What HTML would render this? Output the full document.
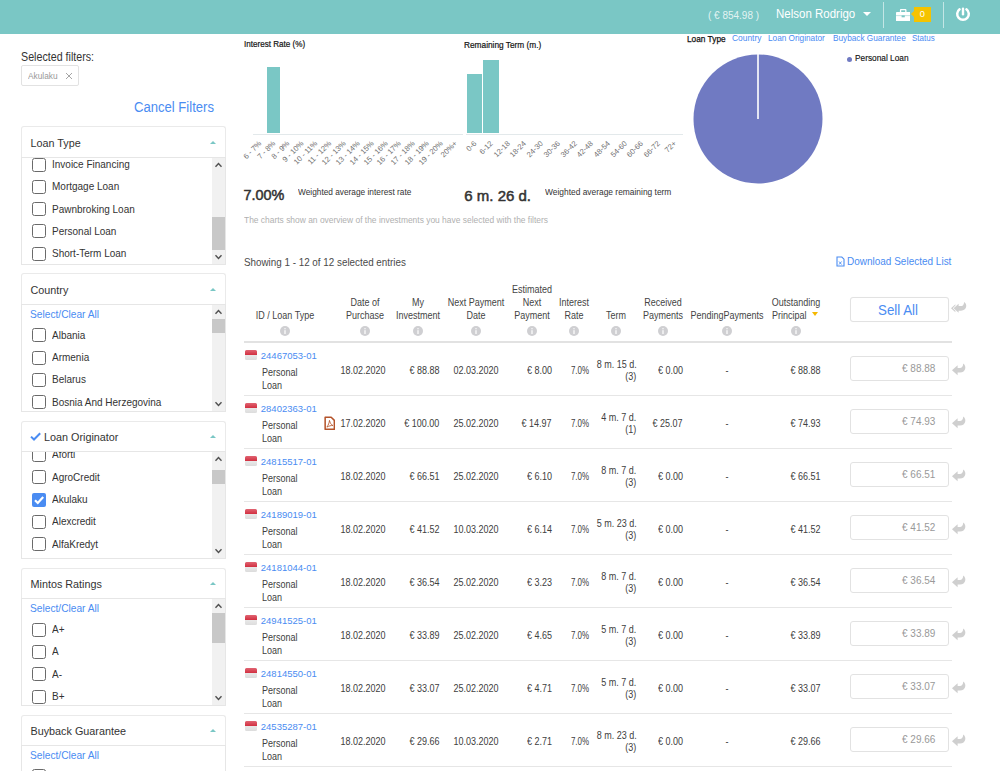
<!DOCTYPE html><html><head><meta charset="utf-8"><style>
html,body{margin:0;padding:0;}
body{width:1000px;height:771px;overflow:hidden;position:relative;background:#fff;font-family:"Liberation Sans", sans-serif;}
.t{position:absolute;white-space:nowrap;}
.rl{position:absolute;font-size:7.6px;line-height:9px;color:#707070;white-space:nowrap;transform:rotate(-45deg);transform-origin:100% 0;}
.ic{position:absolute;}
.flag{position:absolute;width:12px;height:10px;border-radius:1.5px;background:linear-gradient(#d9434f 0,#e25a66 50%,#f2f2f2 50%,#e9e9e9 100%);box-shadow:0 0.5px 1px rgba(0,0,0,0.25);}
</style></head><body>
<div style="position:absolute;left:0px;top:0px;width:1000px;height:34px;background:#7ac7c5"></div>
<div class="t" style="left:708px;top:7.94px;font-size:11.20px;line-height:14.56px;color:rgba(255,255,255,0.8);font-weight:normal;transform:scaleX(0.8929);transform-origin:left center;">( € 854.98 )</div>
<div class="t" style="left:775.5px;top:6.27px;font-size:12.88px;line-height:16.74px;color:#fff;font-weight:normal;transform:scaleX(0.8929);transform-origin:left center;">Nelson Rodrigo</div>
<div style="position:absolute;left:863px;top:11.5px;width:0;height:0;border-left:4px solid transparent;border-right:4px solid transparent;border-top:4.5px solid #fff"></div>
<div style="position:absolute;left:883px;top:2px;width:1px;height:26px;background:rgba(255,255,255,0.55)"></div>
<div style="position:absolute;left:943px;top:2px;width:1px;height:26px;background:rgba(255,255,255,0.55)"></div>
<svg style="position:absolute;left:896px;top:9px" width="14.4" height="12.3" viewBox="0 0 14.4 12.3"><path d="M3.9 3.2V1.2C3.9 .5 4.4 0 5.1 0H9.3C10 0 10.5 .5 10.5 1.2V3.2H9.2V1.3H5.2V3.2Z" fill="#fff"/><rect x="0" y="2.9" width="14.4" height="9.4" rx="0.8" fill="#fff"/><rect x="0" y="6.3" width="14.4" height="0.8" fill="#7ac7c5" opacity="0.6"/><rect x="5.6" y="6.4" width="3.2" height="1.9" fill="#7ac7c5"/></svg>
<div style="position:absolute;left:914px;top:6.5px;width:17px;height:15px;background:#f5c300"></div>
<div style="position:absolute;left:910.5px;top:11px;width:0;height:0;border-top:3.5px solid transparent;border-bottom:3.5px solid transparent;border-right:3.5px solid #f5c300"></div>
<div class="t" style="left:772.2px;width:300px;text-align:center;top:9.23px;font-size:9.20px;line-height:11.96px;color:#fff;font-weight:normal;">0</div>
<svg style="position:absolute;left:955px;top:6px" width="16" height="16" viewBox="0 0 16 16"><path d="M4.59 3.36A5.8 5.8 0 1 0 11.41 3.36" fill="none" stroke="#fff" stroke-width="2.5" stroke-linecap="round"/><path d="M8 2.8V8.2" stroke="#fff" stroke-width="2.4" stroke-linecap="round"/></svg>
<div class="t" style="left:20.5px;top:49.86px;font-size:11.98px;line-height:15.58px;color:#333;font-weight:normal;transform:scaleX(0.8929);transform-origin:left center;">Selected filters:</div>
<div style="position:absolute;left:21px;top:65px;width:58px;height:21px;border:1px solid #e2e2e2;border-radius:2px;box-sizing:border-box"></div>
<div class="t" style="left:28px;top:70.34px;font-size:9.30px;line-height:12.08px;color:#999;font-weight:normal;transform:scaleX(0.8929);transform-origin:left center;">Akulaku</div>
<svg style="position:absolute;left:65px;top:72px" width="8" height="8" viewBox="0 0 8 8"><path d="M1 1L7 7M7 1L1 7" stroke="#a0a0a0" stroke-width="0.95"/></svg>
<div class="t" style="left:133.5px;top:97.78px;font-size:14.67px;line-height:19.07px;color:#4a8cf2;font-weight:normal;transform:scaleX(0.8929);transform-origin:left center;">Cancel Filters</div>
<div style="position:absolute;left:21px;top:126px;width:205px;height:31px;border:1px solid #eaeaea;border-bottom:none;border-radius:3px 3px 0 0;box-sizing:border-box;background:#fff"></div>
<div class="t" style="left:30.5px;top:136.44px;font-size:10.80px;line-height:14.04px;color:#333;font-weight:normal;">Loan Type</div>
<div style="position:absolute;left:210.3px;top:140.6px;width:0;height:0;border-left:3.3px solid transparent;border-right:3.3px solid transparent;border-bottom:3.9px solid #7ac7c5"></div>
<div style="position:absolute;left:21px;top:157px;width:205px;height:108px;border:1px solid #e6e6e6;box-sizing:border-box"></div>
<div style="position:absolute;left:212px;top:158px;width:13px;height:106px;background:#f1f1f1"></div>
<div style="position:absolute;left:212px;top:216.5px;width:13px;height:33.5px;background:#c8c8c8"></div>
<svg style="position:absolute;left:214px;top:162px" width="9" height="6" viewBox="0 0 9 6"><path d="M1.5 4.8L4.5 1.6L7.5 4.8" fill="none" stroke="#505050" stroke-width="1.4"/></svg>
<svg style="position:absolute;left:214px;top:254px" width="9" height="6" viewBox="0 0 9 6"><path d="M1.5 1.2L4.5 4.4L7.5 1.2" fill="none" stroke="#505050" stroke-width="1.4"/></svg>
<div style="position:absolute;left:22px;top:158px;width:190px;height:106px;overflow:hidden">
<div style="position:absolute;left:10px;top:-0.5px;width:14px;height:14px;border:1.8px solid #6a6a6a;border-radius:2.5px;box-sizing:border-box"></div>
<div class="t" style="left:30px;top:-1.06px;font-size:11.20px;line-height:14.56px;color:#333;font-weight:normal;transform:scaleX(0.8929);transform-origin:left center;">Invoice Financing</div>
<div style="position:absolute;left:10px;top:21.8px;width:14px;height:14px;border:1.8px solid #6a6a6a;border-radius:2.5px;box-sizing:border-box"></div>
<div class="t" style="left:30px;top:21.24px;font-size:11.20px;line-height:14.56px;color:#333;font-weight:normal;transform:scaleX(0.8929);transform-origin:left center;">Mortgage Loan</div>
<div style="position:absolute;left:10px;top:44.1px;width:14px;height:14px;border:1.8px solid #6a6a6a;border-radius:2.5px;box-sizing:border-box"></div>
<div class="t" style="left:30px;top:43.54px;font-size:11.20px;line-height:14.56px;color:#333;font-weight:normal;transform:scaleX(0.8929);transform-origin:left center;">Pawnbroking Loan</div>
<div style="position:absolute;left:10px;top:66.4px;width:14px;height:14px;border:1.8px solid #6a6a6a;border-radius:2.5px;box-sizing:border-box"></div>
<div class="t" style="left:30px;top:65.84px;font-size:11.20px;line-height:14.56px;color:#333;font-weight:normal;transform:scaleX(0.8929);transform-origin:left center;">Personal Loan</div>
<div style="position:absolute;left:10px;top:88.7px;width:14px;height:14px;border:1.8px solid #6a6a6a;border-radius:2.5px;box-sizing:border-box"></div>
<div class="t" style="left:30px;top:88.14px;font-size:11.20px;line-height:14.56px;color:#333;font-weight:normal;transform:scaleX(0.8929);transform-origin:left center;">Short-Term Loan</div>
</div>
<div style="position:absolute;left:21px;top:273px;width:205px;height:31px;border:1px solid #eaeaea;border-bottom:none;border-radius:3px 3px 0 0;box-sizing:border-box;background:#fff"></div>
<div class="t" style="left:30.5px;top:283.44px;font-size:10.80px;line-height:14.04px;color:#333;font-weight:normal;">Country</div>
<div style="position:absolute;left:210.3px;top:287.6px;width:0;height:0;border-left:3.3px solid transparent;border-right:3.3px solid transparent;border-bottom:3.9px solid #7ac7c5"></div>
<div style="position:absolute;left:21px;top:304px;width:205px;height:108px;border:1px solid #e6e6e6;box-sizing:border-box"></div>
<div style="position:absolute;left:212px;top:305px;width:13px;height:106px;background:#f1f1f1"></div>
<div style="position:absolute;left:212px;top:318.7px;width:13px;height:14.0px;background:#c8c8c8"></div>
<svg style="position:absolute;left:214px;top:309px" width="9" height="6" viewBox="0 0 9 6"><path d="M1.5 4.8L4.5 1.6L7.5 4.8" fill="none" stroke="#505050" stroke-width="1.4"/></svg>
<svg style="position:absolute;left:214px;top:401px" width="9" height="6" viewBox="0 0 9 6"><path d="M1.5 1.2L4.5 4.4L7.5 1.2" fill="none" stroke="#505050" stroke-width="1.4"/></svg>
<div style="position:absolute;left:22px;top:305px;width:190px;height:106px;overflow:hidden">
<div class="t" style="left:8px;top:1.82px;font-size:11.42px;line-height:14.85px;color:#4a8cf2;font-weight:normal;transform:scaleX(0.8929);transform-origin:left center;">Select/Clear All</div>
<div style="position:absolute;left:10px;top:23.3px;width:14px;height:14px;border:1.8px solid #6a6a6a;border-radius:2.5px;box-sizing:border-box"></div>
<div class="t" style="left:30px;top:22.74px;font-size:11.20px;line-height:14.56px;color:#333;font-weight:normal;transform:scaleX(0.8929);transform-origin:left center;">Albania</div>
<div style="position:absolute;left:10px;top:45.6px;width:14px;height:14px;border:1.8px solid #6a6a6a;border-radius:2.5px;box-sizing:border-box"></div>
<div class="t" style="left:30px;top:45.04px;font-size:11.20px;line-height:14.56px;color:#333;font-weight:normal;transform:scaleX(0.8929);transform-origin:left center;">Armenia</div>
<div style="position:absolute;left:10px;top:67.9px;width:14px;height:14px;border:1.8px solid #6a6a6a;border-radius:2.5px;box-sizing:border-box"></div>
<div class="t" style="left:30px;top:67.34px;font-size:11.20px;line-height:14.56px;color:#333;font-weight:normal;transform:scaleX(0.8929);transform-origin:left center;">Belarus</div>
<div style="position:absolute;left:10px;top:90.2px;width:14px;height:14px;border:1.8px solid #6a6a6a;border-radius:2.5px;box-sizing:border-box"></div>
<div class="t" style="left:30px;top:89.64px;font-size:11.20px;line-height:14.56px;color:#333;font-weight:normal;transform:scaleX(0.8929);transform-origin:left center;">Bosnia And Herzegovina</div>
<div style="position:absolute;left:10px;top:112.5px;width:14px;height:14px;border:1.8px solid #6a6a6a;border-radius:2.5px;box-sizing:border-box"></div>
<div class="t" style="left:30px;top:111.94px;font-size:11.20px;line-height:14.56px;color:#333;font-weight:normal;transform:scaleX(0.8929);transform-origin:left center;">Bulgaria</div>
</div>
<div style="position:absolute;left:21px;top:421px;width:205px;height:30px;border:1px solid #eaeaea;border-bottom:none;border-radius:3px 3px 0 0;box-sizing:border-box;background:#fff"></div>
<svg style="position:absolute;left:29.5px;top:432px" width="11" height="9" viewBox="0 0 11 9"><path d="M1 4.6L4 7.5L10.2 1.2" fill="none" stroke="#4a8cf2" stroke-width="2"/></svg>
<div class="t" style="left:44px;top:430.44px;font-size:10.80px;line-height:14.04px;color:#333;font-weight:normal;">Loan Originator</div>
<div style="position:absolute;left:210.3px;top:434.6px;width:0;height:0;border-left:3.3px solid transparent;border-right:3.3px solid transparent;border-bottom:3.9px solid #7ac7c5"></div>
<div style="position:absolute;left:21px;top:451px;width:205px;height:108px;border:1px solid #e6e6e6;box-sizing:border-box"></div>
<div style="position:absolute;left:212px;top:452px;width:13px;height:106px;background:#f1f1f1"></div>
<div style="position:absolute;left:212px;top:470px;width:13px;height:13.5px;background:#c8c8c8"></div>
<svg style="position:absolute;left:214px;top:456px" width="9" height="6" viewBox="0 0 9 6"><path d="M1.5 4.8L4.5 1.6L7.5 4.8" fill="none" stroke="#505050" stroke-width="1.4"/></svg>
<svg style="position:absolute;left:214px;top:548px" width="9" height="6" viewBox="0 0 9 6"><path d="M1.5 1.2L4.5 4.4L7.5 1.2" fill="none" stroke="#505050" stroke-width="1.4"/></svg>
<div style="position:absolute;left:22px;top:452px;width:190px;height:106px;overflow:hidden">
<div style="position:absolute;left:10px;top:-4.1px;width:14px;height:14px;border:1.8px solid #6a6a6a;border-radius:2.5px;box-sizing:border-box"></div>
<div class="t" style="left:30px;top:-4.66px;font-size:11.20px;line-height:14.56px;color:#333;font-weight:normal;transform:scaleX(0.8929);transform-origin:left center;">Aforti</div>
<div style="position:absolute;left:10px;top:18.2px;width:14px;height:14px;border:1.8px solid #6a6a6a;border-radius:2.5px;box-sizing:border-box"></div>
<div class="t" style="left:30px;top:17.64px;font-size:11.20px;line-height:14.56px;color:#333;font-weight:normal;transform:scaleX(0.8929);transform-origin:left center;">AgroCredit</div>
<div style="position:absolute;left:10px;top:40.5px;width:14px;height:14px;border-radius:2px;background:#4a8cf2"></div>
<svg style="position:absolute;left:10px;top:40.5px" width="14" height="14" viewBox="0 0 14 14"><path d="M3 7.2L5.8 10L11.2 4" fill="none" stroke="#fff" stroke-width="2.2"/></svg>
<div class="t" style="left:30px;top:39.94px;font-size:11.20px;line-height:14.56px;color:#333;font-weight:normal;transform:scaleX(0.8929);transform-origin:left center;">Akulaku</div>
<div style="position:absolute;left:10px;top:62.8px;width:14px;height:14px;border:1.8px solid #6a6a6a;border-radius:2.5px;box-sizing:border-box"></div>
<div class="t" style="left:30px;top:62.24px;font-size:11.20px;line-height:14.56px;color:#333;font-weight:normal;transform:scaleX(0.8929);transform-origin:left center;">Alexcredit</div>
<div style="position:absolute;left:10px;top:85.1px;width:14px;height:14px;border:1.8px solid #6a6a6a;border-radius:2.5px;box-sizing:border-box"></div>
<div class="t" style="left:30px;top:84.54px;font-size:11.20px;line-height:14.56px;color:#333;font-weight:normal;transform:scaleX(0.8929);transform-origin:left center;">AlfaKredyt</div>
</div>
<div style="position:absolute;left:21px;top:568px;width:205px;height:30px;border:1px solid #eaeaea;border-bottom:none;border-radius:3px 3px 0 0;box-sizing:border-box;background:#fff"></div>
<div class="t" style="left:30.5px;top:577.44px;font-size:10.80px;line-height:14.04px;color:#333;font-weight:normal;">Mintos Ratings</div>
<div style="position:absolute;left:210.3px;top:581.6px;width:0;height:0;border-left:3.3px solid transparent;border-right:3.3px solid transparent;border-bottom:3.9px solid #7ac7c5"></div>
<div style="position:absolute;left:21px;top:598px;width:205px;height:108px;border:1px solid #e6e6e6;box-sizing:border-box"></div>
<div style="position:absolute;left:212px;top:599px;width:13px;height:106px;background:#f1f1f1"></div>
<div style="position:absolute;left:212px;top:613.4px;width:13px;height:30.100000000000023px;background:#c8c8c8"></div>
<svg style="position:absolute;left:214px;top:603px" width="9" height="6" viewBox="0 0 9 6"><path d="M1.5 4.8L4.5 1.6L7.5 4.8" fill="none" stroke="#505050" stroke-width="1.4"/></svg>
<svg style="position:absolute;left:214px;top:695px" width="9" height="6" viewBox="0 0 9 6"><path d="M1.5 1.2L4.5 4.4L7.5 1.2" fill="none" stroke="#505050" stroke-width="1.4"/></svg>
<div style="position:absolute;left:22px;top:599px;width:190px;height:106px;overflow:hidden">
<div class="t" style="left:8px;top:2.02px;font-size:11.42px;line-height:14.85px;color:#4a8cf2;font-weight:normal;transform:scaleX(0.8929);transform-origin:left center;">Select/Clear All</div>
<div style="position:absolute;left:10px;top:23.6px;width:14px;height:14px;border:1.8px solid #6a6a6a;border-radius:2.5px;box-sizing:border-box"></div>
<div class="t" style="left:30px;top:23.04px;font-size:11.20px;line-height:14.56px;color:#333;font-weight:normal;transform:scaleX(0.8929);transform-origin:left center;">A+</div>
<div style="position:absolute;left:10px;top:45.9px;width:14px;height:14px;border:1.8px solid #6a6a6a;border-radius:2.5px;box-sizing:border-box"></div>
<div class="t" style="left:30px;top:45.34px;font-size:11.20px;line-height:14.56px;color:#333;font-weight:normal;transform:scaleX(0.8929);transform-origin:left center;">A</div>
<div style="position:absolute;left:10px;top:68.2px;width:14px;height:14px;border:1.8px solid #6a6a6a;border-radius:2.5px;box-sizing:border-box"></div>
<div class="t" style="left:30px;top:67.64px;font-size:11.20px;line-height:14.56px;color:#333;font-weight:normal;transform:scaleX(0.8929);transform-origin:left center;">A-</div>
<div style="position:absolute;left:10px;top:90.5px;width:14px;height:14px;border:1.8px solid #6a6a6a;border-radius:2.5px;box-sizing:border-box"></div>
<div class="t" style="left:30px;top:89.94px;font-size:11.20px;line-height:14.56px;color:#333;font-weight:normal;transform:scaleX(0.8929);transform-origin:left center;">B+</div>
<div style="position:absolute;left:10px;top:112.8px;width:14px;height:14px;border:1.8px solid #6a6a6a;border-radius:2.5px;box-sizing:border-box"></div>
<div class="t" style="left:30px;top:112.24px;font-size:11.20px;line-height:14.56px;color:#333;font-weight:normal;transform:scaleX(0.8929);transform-origin:left center;">B</div>
</div>
<div style="position:absolute;left:21px;top:715px;width:205px;height:30px;border:1px solid #eaeaea;border-bottom:none;border-radius:3px 3px 0 0;box-sizing:border-box;background:#fff"></div>
<div class="t" style="left:30.5px;top:724.44px;font-size:10.80px;line-height:14.04px;color:#333;font-weight:normal;">Buyback Guarantee</div>
<div style="position:absolute;left:210.3px;top:728.6px;width:0;height:0;border-left:3.3px solid transparent;border-right:3.3px solid transparent;border-bottom:3.9px solid #7ac7c5"></div>
<div style="position:absolute;left:21px;top:745px;width:205px;height:108px;border:1px solid #e6e6e6;box-sizing:border-box"></div>
<div style="position:absolute;left:22px;top:746px;width:190px;height:106px;overflow:hidden">
<div class="t" style="left:8px;top:2.12px;font-size:11.42px;line-height:14.85px;color:#4a8cf2;font-weight:normal;transform:scaleX(0.8929);transform-origin:left center;">Select/Clear All</div>
<div style="position:absolute;left:10px;top:23.3px;width:14px;height:14px;border:1.8px solid #6a6a6a;border-radius:2.5px;box-sizing:border-box"></div>
<div class="t" style="left:30px;top:22.74px;font-size:11.20px;line-height:14.56px;color:#333;font-weight:normal;transform:scaleX(0.8929);transform-origin:left center;">Yes</div>
<div style="position:absolute;left:10px;top:45.6px;width:14px;height:14px;border:1.8px solid #6a6a6a;border-radius:2.5px;box-sizing:border-box"></div>
<div class="t" style="left:30px;top:45.04px;font-size:11.20px;line-height:14.56px;color:#333;font-weight:normal;transform:scaleX(0.8929);transform-origin:left center;">No</div>
</div>
<div class="t" style="left:243.5px;top:39.06px;font-size:9.07px;line-height:11.79px;color:#111;font-weight:normal;transform:scaleX(0.8929);transform-origin:left center;-webkit-text-stroke:0.2px #111">Interest Rate (%)</div>
<div style="position:absolute;left:252.5px;top:134px;width:210px;height:1px;background:#e3e9eb"></div>
<div style="position:absolute;left:267px;top:67px;width:13px;height:66px;background:#7ac7c5"></div>
<div class="rl" style="right:742.7px;top:139px">6 - 7%</div>
<div class="rl" style="right:728.8px;top:139px">7 - 8%</div>
<div class="rl" style="right:714.8px;top:139px">8 - 9%</div>
<div class="rl" style="right:700.9px;top:139px">9 - 10%</div>
<div class="rl" style="right:686.9px;top:139px">10 - 11%</div>
<div class="rl" style="right:673.0px;top:139px">11 - 12%</div>
<div class="rl" style="right:659.0px;top:139px">12 - 13%</div>
<div class="rl" style="right:645.0px;top:139px">13 - 14%</div>
<div class="rl" style="right:631.1px;top:139px">14 - 15%</div>
<div class="rl" style="right:617.1px;top:139px">15 - 16%</div>
<div class="rl" style="right:603.2px;top:139px">16 - 17%</div>
<div class="rl" style="right:589.2px;top:139px">17 - 18%</div>
<div class="rl" style="right:575.3px;top:139px">18 - 19%</div>
<div class="rl" style="right:561.4px;top:139px">19 - 20%</div>
<div class="rl" style="right:547.4px;top:139px">20%+</div>
<div class="t" style="left:464.3px;top:38.84px;font-size:9.30px;line-height:12.08px;color:#111;font-weight:normal;transform:scaleX(0.8929);transform-origin:left center;-webkit-text-stroke:0.2px #111">Remaining Term (m.)</div>
<div style="position:absolute;left:466px;top:134px;width:217px;height:1px;background:#e3e9eb"></div>
<div style="position:absolute;left:466.5px;top:73.5px;width:15.5px;height:59.5px;background:#7ac7c5"></div>
<div style="position:absolute;left:483px;top:60px;width:16px;height:73px;background:#7ac7c5"></div>
<div class="rl" style="right:528.2px;top:139px">0-6</div>
<div class="rl" style="right:511.5px;top:139px">6-12</div>
<div class="rl" style="right:494.8px;top:139px">12-18</div>
<div class="rl" style="right:478.1px;top:139px">18-24</div>
<div class="rl" style="right:461.4px;top:139px">24-30</div>
<div class="rl" style="right:444.7px;top:139px">30-36</div>
<div class="rl" style="right:428.0px;top:139px">36-42</div>
<div class="rl" style="right:411.3px;top:139px">42-48</div>
<div class="rl" style="right:394.6px;top:139px">48-54</div>
<div class="rl" style="right:377.9px;top:139px">54-60</div>
<div class="rl" style="right:361.2px;top:139px">60-66</div>
<div class="rl" style="right:344.5px;top:139px">66-72</div>
<div class="rl" style="right:327.8px;top:139px">72+</div>
<div class="t" style="left:243.5px;top:186.25px;font-size:14.40px;line-height:18.72px;color:#333;font-weight:normal;-webkit-text-stroke:0.5px #333">7.00%</div>
<div class="t" style="left:297.5px;top:185.84px;font-size:9.30px;line-height:12.08px;color:#333;font-weight:normal;transform:scaleX(0.8929);transform-origin:left center;">Weighted average interest rate</div>
<div class="t" style="left:464.3px;top:185.65px;font-size:15.00px;line-height:19.5px;color:#333;font-weight:normal;-webkit-text-stroke:0.5px #333">6 m. 26 d.</div>
<div class="t" style="left:544.5px;top:185.73px;font-size:9.41px;line-height:12.23px;color:#333;font-weight:normal;transform:scaleX(0.8929);transform-origin:left center;">Weighted average remaining term</div>
<div class="t" style="left:243.5px;top:214.18px;font-size:9.45px;line-height:12.29px;color:#b0b0b0;font-weight:normal;transform:scaleX(0.8929);transform-origin:left center;">The charts show an overview of the investments you have selected with the filters</div>
<div class="t" style="left:687px;top:32.84px;font-size:9.30px;line-height:12.08px;color:#111;font-weight:normal;transform:scaleX(0.8929);transform-origin:left center;-webkit-text-stroke:0.25px #111">Loan Type</div>
<div class="t" style="left:731.8px;top:33.17px;font-size:8.96px;line-height:11.65px;color:#4a8cf2;font-weight:normal;transform:scaleX(0.9375);transform-origin:left center;">Country</div>
<div class="t" style="left:768.3px;top:33.17px;font-size:8.96px;line-height:11.65px;color:#4a8cf2;font-weight:normal;transform:scaleX(0.9196);transform-origin:left center;">Loan Originator</div>
<div class="t" style="left:832.6px;top:33.17px;font-size:8.96px;line-height:11.65px;color:#4a8cf2;font-weight:normal;transform:scaleX(0.9196);transform-origin:left center;">Buyback Guarantee</div>
<div class="t" style="left:912px;top:33.17px;font-size:8.96px;line-height:11.65px;color:#4a8cf2;font-weight:normal;transform:scaleX(0.8929);transform-origin:left center;">Status</div>
<svg style="position:absolute;left:693px;top:54px" width="130" height="130" viewBox="0 0 130 130"><circle cx="65" cy="65" r="64.5" fill="#707ac2"/><rect x="64.2" y="0" width="1.6" height="65" fill="#fff"/></svg>
<div style="position:absolute;left:846.5px;top:56.5px;width:5px;height:5px;border-radius:50%;background:#707ac2"></div>
<div class="t" style="left:854.7px;top:52.34px;font-size:9.30px;line-height:12.08px;color:#111;font-weight:normal;transform:scaleX(0.8929);transform-origin:left center;-webkit-text-stroke:0.15px #111">Personal Loan</div>
<div class="t" style="left:243.5px;top:255.14px;font-size:11.20px;line-height:14.56px;color:#4a4a4a;font-weight:normal;transform:scaleX(0.8795);transform-origin:left center;">Showing 1 - 12 of 12 selected entries</div>
<svg style="position:absolute;left:836px;top:256px" width="9" height="11" viewBox="0 0 9 11"><path d="M1 1h4.8L8 3.2V10H1z" fill="none" stroke="#4a8cf2" stroke-width="1.1"/><path d="M3 5.5l2.6 3M5.6 5.5L3 8.5" stroke="#4a8cf2" stroke-width="0.9"/></svg>
<div class="t" style="left:847px;top:253.94px;font-size:11.20px;line-height:14.56px;color:#4a8cf2;font-weight:normal;transform:scaleX(0.8929);transform-origin:left center;">Download Selected List</div>
<div class="t" style="left:134.5px;width:300px;text-align:center;top:308.66px;font-size:10.08px;line-height:13.1px;color:#444;font-weight:normal;transform:scaleX(0.8929);transform-origin:center center;">ID / Loan Type</div>
<svg class="ic" style="left:279.5px;top:325.7px" width="10" height="10" viewBox="0 0 10 10"><circle cx="5" cy="5" r="5" fill="#cfcfd2"/><rect x="4.4" y="4.2" width="1.2" height="3.8" fill="#fff"/><rect x="4.4" y="2.1" width="1.2" height="1.2" fill="#fff"/></svg>
<div class="t" style="left:215px;width:300px;text-align:center;top:295.66px;font-size:10.08px;line-height:13.1px;color:#444;font-weight:normal;transform:scaleX(0.8929);transform-origin:center center;">Date of</div>
<div class="t" style="left:215px;width:300px;text-align:center;top:308.66px;font-size:10.08px;line-height:13.1px;color:#444;font-weight:normal;transform:scaleX(0.8929);transform-origin:center center;">Purchase</div>
<svg class="ic" style="left:360px;top:325.7px" width="10" height="10" viewBox="0 0 10 10"><circle cx="5" cy="5" r="5" fill="#cfcfd2"/><rect x="4.4" y="4.2" width="1.2" height="3.8" fill="#fff"/><rect x="4.4" y="2.1" width="1.2" height="1.2" fill="#fff"/></svg>
<div class="t" style="left:268px;width:300px;text-align:center;top:295.66px;font-size:10.08px;line-height:13.1px;color:#444;font-weight:normal;transform:scaleX(0.8929);transform-origin:center center;">My</div>
<div class="t" style="left:268px;width:300px;text-align:center;top:308.66px;font-size:10.08px;line-height:13.1px;color:#444;font-weight:normal;transform:scaleX(0.8929);transform-origin:center center;">Investment</div>
<svg class="ic" style="left:413px;top:325.7px" width="10" height="10" viewBox="0 0 10 10"><circle cx="5" cy="5" r="5" fill="#cfcfd2"/><rect x="4.4" y="4.2" width="1.2" height="3.8" fill="#fff"/><rect x="4.4" y="2.1" width="1.2" height="1.2" fill="#fff"/></svg>
<div class="t" style="left:326px;width:300px;text-align:center;top:295.66px;font-size:10.08px;line-height:13.1px;color:#444;font-weight:normal;transform:scaleX(0.8929);transform-origin:center center;">Next Payment</div>
<div class="t" style="left:326px;width:300px;text-align:center;top:308.66px;font-size:10.08px;line-height:13.1px;color:#444;font-weight:normal;transform:scaleX(0.8929);transform-origin:center center;">Date</div>
<svg class="ic" style="left:471px;top:325.7px" width="10" height="10" viewBox="0 0 10 10"><circle cx="5" cy="5" r="5" fill="#cfcfd2"/><rect x="4.4" y="4.2" width="1.2" height="3.8" fill="#fff"/><rect x="4.4" y="2.1" width="1.2" height="1.2" fill="#fff"/></svg>
<div class="t" style="left:382px;width:300px;text-align:center;top:282.66px;font-size:10.08px;line-height:13.1px;color:#444;font-weight:normal;transform:scaleX(0.8929);transform-origin:center center;">Estimated</div>
<div class="t" style="left:382px;width:300px;text-align:center;top:295.66px;font-size:10.08px;line-height:13.1px;color:#444;font-weight:normal;transform:scaleX(0.8929);transform-origin:center center;">Next</div>
<div class="t" style="left:382px;width:300px;text-align:center;top:308.66px;font-size:10.08px;line-height:13.1px;color:#444;font-weight:normal;transform:scaleX(0.8929);transform-origin:center center;">Payment</div>
<svg class="ic" style="left:527px;top:325.7px" width="10" height="10" viewBox="0 0 10 10"><circle cx="5" cy="5" r="5" fill="#cfcfd2"/><rect x="4.4" y="4.2" width="1.2" height="3.8" fill="#fff"/><rect x="4.4" y="2.1" width="1.2" height="1.2" fill="#fff"/></svg>
<div class="t" style="left:423.79999999999995px;width:300px;text-align:center;top:295.66px;font-size:10.08px;line-height:13.1px;color:#444;font-weight:normal;transform:scaleX(0.8929);transform-origin:center center;">Interest</div>
<div class="t" style="left:423.79999999999995px;width:300px;text-align:center;top:308.66px;font-size:10.08px;line-height:13.1px;color:#444;font-weight:normal;transform:scaleX(0.8929);transform-origin:center center;">Rate</div>
<svg class="ic" style="left:568.8px;top:325.7px" width="10" height="10" viewBox="0 0 10 10"><circle cx="5" cy="5" r="5" fill="#cfcfd2"/><rect x="4.4" y="4.2" width="1.2" height="3.8" fill="#fff"/><rect x="4.4" y="2.1" width="1.2" height="1.2" fill="#fff"/></svg>
<div class="t" style="left:465.6px;width:300px;text-align:center;top:308.66px;font-size:10.08px;line-height:13.1px;color:#444;font-weight:normal;transform:scaleX(0.8929);transform-origin:center center;">Term</div>
<svg class="ic" style="left:610.6px;top:325.7px" width="10" height="10" viewBox="0 0 10 10"><circle cx="5" cy="5" r="5" fill="#cfcfd2"/><rect x="4.4" y="4.2" width="1.2" height="3.8" fill="#fff"/><rect x="4.4" y="2.1" width="1.2" height="1.2" fill="#fff"/></svg>
<div class="t" style="left:513px;width:300px;text-align:center;top:295.66px;font-size:10.08px;line-height:13.1px;color:#444;font-weight:normal;transform:scaleX(0.8929);transform-origin:center center;">Received</div>
<div class="t" style="left:513px;width:300px;text-align:center;top:308.66px;font-size:10.08px;line-height:13.1px;color:#444;font-weight:normal;transform:scaleX(0.8929);transform-origin:center center;">Payments</div>
<svg class="ic" style="left:658px;top:325.7px" width="10" height="10" viewBox="0 0 10 10"><circle cx="5" cy="5" r="5" fill="#cfcfd2"/><rect x="4.4" y="4.2" width="1.2" height="3.8" fill="#fff"/><rect x="4.4" y="2.1" width="1.2" height="1.2" fill="#fff"/></svg>
<div class="t" style="left:577px;width:300px;text-align:center;top:308.66px;font-size:10.08px;line-height:13.1px;color:#444;font-weight:normal;transform:scaleX(0.8929);transform-origin:center center;">PendingPayments</div>
<svg class="ic" style="left:722px;top:325.7px" width="10" height="10" viewBox="0 0 10 10"><circle cx="5" cy="5" r="5" fill="#cfcfd2"/><rect x="4.4" y="4.2" width="1.2" height="3.8" fill="#fff"/><rect x="4.4" y="2.1" width="1.2" height="1.2" fill="#fff"/></svg>
<div class="t" style="left:646px;width:300px;text-align:center;top:295.66px;font-size:10.08px;line-height:13.1px;color:#444;font-weight:normal;transform:scaleX(0.8929);transform-origin:center center;">Outstanding</div>
<svg class="ic" style="left:791px;top:325.7px" width="10" height="10" viewBox="0 0 10 10"><circle cx="5" cy="5" r="5" fill="#cfcfd2"/><rect x="4.4" y="4.2" width="1.2" height="3.8" fill="#fff"/><rect x="4.4" y="2.1" width="1.2" height="1.2" fill="#fff"/></svg>
<div class="t" style="left:772px;top:308.66px;font-size:10.08px;line-height:13.1px;color:#444;font-weight:normal;transform:scaleX(0.8929);transform-origin:left center;">Principal</div>
<div style="position:absolute;left:812.3px;top:311.8px;width:0;height:0;border-left:3.7px solid transparent;border-right:3.7px solid transparent;border-top:4.6px solid #f5b800"></div>
<div style="position:absolute;left:849.5px;top:297px;width:99px;height:24.5px;border:1px solid #e2e2e2;box-shadow:0 0 1px rgba(0,0,0,0.06);border-radius:3px;box-sizing:border-box;background:#fff"></div>
<div class="t" style="left:748.4px;width:300px;text-align:center;top:300.56px;font-size:14.90px;line-height:19.36px;color:#4a8cf2;font-weight:normal;transform:scaleX(0.8929);transform-origin:center center;">Sell All</div>
<svg style="position:absolute;left:950.5px;top:302px" width="16" height="12" viewBox="0 0 16 12"><path d="M2.6 6.2L7.6 1.7V10.7Z" fill="#cfcfcf"/><path d="M0 6.2L4.4 2.2V3.6L1.8 6.2L4.4 8.8V10.2Z" fill="#cfcfcf"/><path d="M7 4.1H10C11.6 4.1 12.8 3 13.2 0C14.8 1.3 15.5 2.8 15.2 4.6C14.8 7 12.8 8.7 10 8.7H7Z" fill="#cfcfcf"/></svg>
<div style="position:absolute;left:243.5px;top:341px;width:708.5px;height:2px;background:#e2e2e2"></div>
<svg style="position:absolute;left:245px;top:350.3px" width="12" height="10" viewBox="0 0 12 10"><defs><linearGradient id="fr0" x1="0" y1="0" x2="0" y2="1"><stop offset="0" stop-color="#e06472"/><stop offset="1" stop-color="#d22f40"/></linearGradient><linearGradient id="fw0" x1="0" y1="0" x2="0" y2="1"><stop offset="0" stop-color="#f6f6f6"/><stop offset="1" stop-color="#dcdcdc"/></linearGradient></defs><rect x="0" y="0" width="12" height="10" rx="1.5" fill="url(#fw0)"/><path d="M1.5 0H10.5A1.5 1.5 0 0 1 12 1.5V5H0V1.5A1.5 1.5 0 0 1 1.5 0Z" fill="url(#fr0)"/></svg>
<div class="t" style="left:260.8px;top:349.63px;font-size:9.50px;line-height:12.35px;color:#4a8cf2;font-weight:normal;">24467053-01</div>
<div class="t" style="left:261.6px;top:365.86px;font-size:10.08px;line-height:13.1px;color:#404040;font-weight:normal;transform:scaleX(0.8929);transform-origin:left center;">Personal</div>
<div class="t" style="left:261.6px;top:379.06px;font-size:10.08px;line-height:13.1px;color:#404040;font-weight:normal;transform:scaleX(0.8929);transform-origin:left center;">Loan</div>
<div class="t" style="left:213.3px;width:300px;text-align:center;top:364.06px;font-size:10.08px;line-height:13.1px;color:#404040;font-weight:normal;transform:scaleX(0.8929);transform-origin:center center;">18.02.2020</div>
<div class="t" style="right:560.5px;top:364.06px;font-size:10.08px;line-height:13.1px;color:#404040;font-weight:normal;transform:scaleX(0.8929);transform-origin:right center;">€ 88.88</div>
<div class="t" style="left:325.6px;width:300px;text-align:center;top:364.06px;font-size:10.08px;line-height:13.1px;color:#404040;font-weight:normal;transform:scaleX(0.8929);transform-origin:center center;">02.03.2020</div>
<div class="t" style="right:448px;top:364.06px;font-size:10.08px;line-height:13.1px;color:#404040;font-weight:normal;transform:scaleX(0.8929);transform-origin:right center;">€ 8.00</div>
<div class="t" style="right:411.4px;top:364.06px;font-size:10.08px;line-height:13.1px;color:#404040;font-weight:normal;transform:scaleX(0.7857);transform-origin:right center;">7.0%</div>
<div class="t" style="right:363.5px;top:358.06px;font-size:10.08px;line-height:13.1px;color:#404040;font-weight:normal;transform:scaleX(0.8929);transform-origin:right center;">8 m. 15 d.</div>
<div class="t" style="right:363.5px;top:369.66px;font-size:10.08px;line-height:13.1px;color:#404040;font-weight:normal;transform:scaleX(0.8929);transform-origin:right center;">(3)</div>
<div class="t" style="right:317px;top:364.06px;font-size:10.08px;line-height:13.1px;color:#404040;font-weight:normal;transform:scaleX(0.8929);transform-origin:right center;">€ 0.00</div>
<div class="t" style="left:577px;width:300px;text-align:center;top:363.56px;font-size:10.08px;line-height:13.1px;color:#404040;font-weight:normal;transform:scaleX(0.8929);transform-origin:center center;">-</div>
<div class="t" style="right:179.20000000000005px;top:364.06px;font-size:10.08px;line-height:13.1px;color:#404040;font-weight:normal;transform:scaleX(0.8929);transform-origin:right center;">€ 88.88</div>
<div style="position:absolute;left:849.5px;top:356.2px;width:99px;height:24.6px;border:1px solid #e2e2e2;border-radius:3px;box-sizing:border-box;background:#fff"></div>
<div class="t" style="right:64.5px;top:361.44px;font-size:11.20px;line-height:14.56px;color:#999;font-weight:normal;transform:scaleX(0.8929);transform-origin:right center;">€ 88.88</div>
<svg style="position:absolute;left:952px;top:363.3px" width="14" height="13" viewBox="0 0 14 13"><path d="M0 7.2L5.6 2.2V12.2Z" fill="#cfcfcf"/><path d="M5 4.9H8C9.6 4.9 10.9 3.8 11.3 0.4C12.9 1.7 13.6 3.2 13.3 5.2C12.9 7.8 10.8 9.6 8 9.6H5Z" fill="#cfcfcf"/></svg>
<div style="position:absolute;left:243.5px;top:395px;width:708.5px;height:1px;background:#e6e6e6"></div>
<svg style="position:absolute;left:245px;top:403.3px" width="12" height="10" viewBox="0 0 12 10"><defs><linearGradient id="fr1" x1="0" y1="0" x2="0" y2="1"><stop offset="0" stop-color="#e06472"/><stop offset="1" stop-color="#d22f40"/></linearGradient><linearGradient id="fw1" x1="0" y1="0" x2="0" y2="1"><stop offset="0" stop-color="#f6f6f6"/><stop offset="1" stop-color="#dcdcdc"/></linearGradient></defs><rect x="0" y="0" width="12" height="10" rx="1.5" fill="url(#fw1)"/><path d="M1.5 0H10.5A1.5 1.5 0 0 1 12 1.5V5H0V1.5A1.5 1.5 0 0 1 1.5 0Z" fill="url(#fr1)"/></svg>
<div class="t" style="left:260.8px;top:402.63px;font-size:9.50px;line-height:12.35px;color:#4a8cf2;font-weight:normal;">28402363-01</div>
<div class="t" style="left:261.6px;top:418.86px;font-size:10.08px;line-height:13.1px;color:#404040;font-weight:normal;transform:scaleX(0.8929);transform-origin:left center;">Personal</div>
<div class="t" style="left:261.6px;top:432.06px;font-size:10.08px;line-height:13.1px;color:#404040;font-weight:normal;transform:scaleX(0.8929);transform-origin:left center;">Loan</div>
<svg style="position:absolute;left:323.5px;top:415.5px" width="11.5" height="14.5" viewBox="0 0 12 15"><path d="M1.2 1.2h6.3l3.3 3.3v9.3H1.2z" fill="none" stroke="#b4532a" stroke-width="1.6" stroke-linejoin="round"/><path d="M3 11.5c1.5-2 2.5-4.5 2.7-7 .6 2.8 1.8 4.4 3.6 5.4-1.8-.2-4 .4-6.3 1.6z" fill="none" stroke="#b4532a" stroke-width="0.9"/></svg>
<div class="t" style="left:213.3px;width:300px;text-align:center;top:417.06px;font-size:10.08px;line-height:13.1px;color:#404040;font-weight:normal;transform:scaleX(0.8929);transform-origin:center center;">17.02.2020</div>
<div class="t" style="right:560.5px;top:417.06px;font-size:10.08px;line-height:13.1px;color:#404040;font-weight:normal;transform:scaleX(0.8929);transform-origin:right center;">€ 100.00</div>
<div class="t" style="left:325.6px;width:300px;text-align:center;top:417.06px;font-size:10.08px;line-height:13.1px;color:#404040;font-weight:normal;transform:scaleX(0.8929);transform-origin:center center;">25.02.2020</div>
<div class="t" style="right:448px;top:417.06px;font-size:10.08px;line-height:13.1px;color:#404040;font-weight:normal;transform:scaleX(0.8929);transform-origin:right center;">€ 14.97</div>
<div class="t" style="right:411.4px;top:417.06px;font-size:10.08px;line-height:13.1px;color:#404040;font-weight:normal;transform:scaleX(0.7857);transform-origin:right center;">7.0%</div>
<div class="t" style="right:363.5px;top:411.06px;font-size:10.08px;line-height:13.1px;color:#404040;font-weight:normal;transform:scaleX(0.8929);transform-origin:right center;">4 m. 7 d.</div>
<div class="t" style="right:363.5px;top:422.66px;font-size:10.08px;line-height:13.1px;color:#404040;font-weight:normal;transform:scaleX(0.8929);transform-origin:right center;">(1)</div>
<div class="t" style="right:317px;top:417.06px;font-size:10.08px;line-height:13.1px;color:#404040;font-weight:normal;transform:scaleX(0.8929);transform-origin:right center;">€ 25.07</div>
<div class="t" style="left:577px;width:300px;text-align:center;top:416.56px;font-size:10.08px;line-height:13.1px;color:#404040;font-weight:normal;transform:scaleX(0.8929);transform-origin:center center;">-</div>
<div class="t" style="right:179.20000000000005px;top:417.06px;font-size:10.08px;line-height:13.1px;color:#404040;font-weight:normal;transform:scaleX(0.8929);transform-origin:right center;">€ 74.93</div>
<div style="position:absolute;left:849.5px;top:409.2px;width:99px;height:24.6px;border:1px solid #e2e2e2;border-radius:3px;box-sizing:border-box;background:#fff"></div>
<div class="t" style="right:64.5px;top:414.44px;font-size:11.20px;line-height:14.56px;color:#999;font-weight:normal;transform:scaleX(0.8929);transform-origin:right center;">€ 74.93</div>
<svg style="position:absolute;left:952px;top:416.3px" width="14" height="13" viewBox="0 0 14 13"><path d="M0 7.2L5.6 2.2V12.2Z" fill="#cfcfcf"/><path d="M5 4.9H8C9.6 4.9 10.9 3.8 11.3 0.4C12.9 1.7 13.6 3.2 13.3 5.2C12.9 7.8 10.8 9.6 8 9.6H5Z" fill="#cfcfcf"/></svg>
<div style="position:absolute;left:243.5px;top:448px;width:708.5px;height:1px;background:#e6e6e6"></div>
<svg style="position:absolute;left:245px;top:456.3px" width="12" height="10" viewBox="0 0 12 10"><defs><linearGradient id="fr2" x1="0" y1="0" x2="0" y2="1"><stop offset="0" stop-color="#e06472"/><stop offset="1" stop-color="#d22f40"/></linearGradient><linearGradient id="fw2" x1="0" y1="0" x2="0" y2="1"><stop offset="0" stop-color="#f6f6f6"/><stop offset="1" stop-color="#dcdcdc"/></linearGradient></defs><rect x="0" y="0" width="12" height="10" rx="1.5" fill="url(#fw2)"/><path d="M1.5 0H10.5A1.5 1.5 0 0 1 12 1.5V5H0V1.5A1.5 1.5 0 0 1 1.5 0Z" fill="url(#fr2)"/></svg>
<div class="t" style="left:260.8px;top:455.63px;font-size:9.50px;line-height:12.35px;color:#4a8cf2;font-weight:normal;">24815517-01</div>
<div class="t" style="left:261.6px;top:471.86px;font-size:10.08px;line-height:13.1px;color:#404040;font-weight:normal;transform:scaleX(0.8929);transform-origin:left center;">Personal</div>
<div class="t" style="left:261.6px;top:485.06px;font-size:10.08px;line-height:13.1px;color:#404040;font-weight:normal;transform:scaleX(0.8929);transform-origin:left center;">Loan</div>
<div class="t" style="left:213.3px;width:300px;text-align:center;top:470.06px;font-size:10.08px;line-height:13.1px;color:#404040;font-weight:normal;transform:scaleX(0.8929);transform-origin:center center;">18.02.2020</div>
<div class="t" style="right:560.5px;top:470.06px;font-size:10.08px;line-height:13.1px;color:#404040;font-weight:normal;transform:scaleX(0.8929);transform-origin:right center;">€ 66.51</div>
<div class="t" style="left:325.6px;width:300px;text-align:center;top:470.06px;font-size:10.08px;line-height:13.1px;color:#404040;font-weight:normal;transform:scaleX(0.8929);transform-origin:center center;">25.02.2020</div>
<div class="t" style="right:448px;top:470.06px;font-size:10.08px;line-height:13.1px;color:#404040;font-weight:normal;transform:scaleX(0.8929);transform-origin:right center;">€ 6.10</div>
<div class="t" style="right:411.4px;top:470.06px;font-size:10.08px;line-height:13.1px;color:#404040;font-weight:normal;transform:scaleX(0.7857);transform-origin:right center;">7.0%</div>
<div class="t" style="right:363.5px;top:464.06px;font-size:10.08px;line-height:13.1px;color:#404040;font-weight:normal;transform:scaleX(0.8929);transform-origin:right center;">8 m. 7 d.</div>
<div class="t" style="right:363.5px;top:475.66px;font-size:10.08px;line-height:13.1px;color:#404040;font-weight:normal;transform:scaleX(0.8929);transform-origin:right center;">(3)</div>
<div class="t" style="right:317px;top:470.06px;font-size:10.08px;line-height:13.1px;color:#404040;font-weight:normal;transform:scaleX(0.8929);transform-origin:right center;">€ 0.00</div>
<div class="t" style="left:577px;width:300px;text-align:center;top:469.56px;font-size:10.08px;line-height:13.1px;color:#404040;font-weight:normal;transform:scaleX(0.8929);transform-origin:center center;">-</div>
<div class="t" style="right:179.20000000000005px;top:470.06px;font-size:10.08px;line-height:13.1px;color:#404040;font-weight:normal;transform:scaleX(0.8929);transform-origin:right center;">€ 66.51</div>
<div style="position:absolute;left:849.5px;top:462.2px;width:99px;height:24.6px;border:1px solid #e2e2e2;border-radius:3px;box-sizing:border-box;background:#fff"></div>
<div class="t" style="right:64.5px;top:467.44px;font-size:11.20px;line-height:14.56px;color:#999;font-weight:normal;transform:scaleX(0.8929);transform-origin:right center;">€ 66.51</div>
<svg style="position:absolute;left:952px;top:469.3px" width="14" height="13" viewBox="0 0 14 13"><path d="M0 7.2L5.6 2.2V12.2Z" fill="#cfcfcf"/><path d="M5 4.9H8C9.6 4.9 10.9 3.8 11.3 0.4C12.9 1.7 13.6 3.2 13.3 5.2C12.9 7.8 10.8 9.6 8 9.6H5Z" fill="#cfcfcf"/></svg>
<div style="position:absolute;left:243.5px;top:501px;width:708.5px;height:1px;background:#e6e6e6"></div>
<svg style="position:absolute;left:245px;top:509.3px" width="12" height="10" viewBox="0 0 12 10"><defs><linearGradient id="fr3" x1="0" y1="0" x2="0" y2="1"><stop offset="0" stop-color="#e06472"/><stop offset="1" stop-color="#d22f40"/></linearGradient><linearGradient id="fw3" x1="0" y1="0" x2="0" y2="1"><stop offset="0" stop-color="#f6f6f6"/><stop offset="1" stop-color="#dcdcdc"/></linearGradient></defs><rect x="0" y="0" width="12" height="10" rx="1.5" fill="url(#fw3)"/><path d="M1.5 0H10.5A1.5 1.5 0 0 1 12 1.5V5H0V1.5A1.5 1.5 0 0 1 1.5 0Z" fill="url(#fr3)"/></svg>
<div class="t" style="left:260.8px;top:508.63px;font-size:9.50px;line-height:12.35px;color:#4a8cf2;font-weight:normal;">24189019-01</div>
<div class="t" style="left:261.6px;top:524.86px;font-size:10.08px;line-height:13.1px;color:#404040;font-weight:normal;transform:scaleX(0.8929);transform-origin:left center;">Personal</div>
<div class="t" style="left:261.6px;top:538.06px;font-size:10.08px;line-height:13.1px;color:#404040;font-weight:normal;transform:scaleX(0.8929);transform-origin:left center;">Loan</div>
<div class="t" style="left:213.3px;width:300px;text-align:center;top:523.06px;font-size:10.08px;line-height:13.1px;color:#404040;font-weight:normal;transform:scaleX(0.8929);transform-origin:center center;">18.02.2020</div>
<div class="t" style="right:560.5px;top:523.06px;font-size:10.08px;line-height:13.1px;color:#404040;font-weight:normal;transform:scaleX(0.8929);transform-origin:right center;">€ 41.52</div>
<div class="t" style="left:325.6px;width:300px;text-align:center;top:523.06px;font-size:10.08px;line-height:13.1px;color:#404040;font-weight:normal;transform:scaleX(0.8929);transform-origin:center center;">10.03.2020</div>
<div class="t" style="right:448px;top:523.06px;font-size:10.08px;line-height:13.1px;color:#404040;font-weight:normal;transform:scaleX(0.8929);transform-origin:right center;">€ 6.14</div>
<div class="t" style="right:411.4px;top:523.06px;font-size:10.08px;line-height:13.1px;color:#404040;font-weight:normal;transform:scaleX(0.7857);transform-origin:right center;">7.0%</div>
<div class="t" style="right:363.5px;top:517.06px;font-size:10.08px;line-height:13.1px;color:#404040;font-weight:normal;transform:scaleX(0.8929);transform-origin:right center;">5 m. 23 d.</div>
<div class="t" style="right:363.5px;top:528.66px;font-size:10.08px;line-height:13.1px;color:#404040;font-weight:normal;transform:scaleX(0.8929);transform-origin:right center;">(3)</div>
<div class="t" style="right:317px;top:523.06px;font-size:10.08px;line-height:13.1px;color:#404040;font-weight:normal;transform:scaleX(0.8929);transform-origin:right center;">€ 0.00</div>
<div class="t" style="left:577px;width:300px;text-align:center;top:522.56px;font-size:10.08px;line-height:13.1px;color:#404040;font-weight:normal;transform:scaleX(0.8929);transform-origin:center center;">-</div>
<div class="t" style="right:179.20000000000005px;top:523.06px;font-size:10.08px;line-height:13.1px;color:#404040;font-weight:normal;transform:scaleX(0.8929);transform-origin:right center;">€ 41.52</div>
<div style="position:absolute;left:849.5px;top:515.2px;width:99px;height:24.6px;border:1px solid #e2e2e2;border-radius:3px;box-sizing:border-box;background:#fff"></div>
<div class="t" style="right:64.5px;top:520.44px;font-size:11.20px;line-height:14.56px;color:#999;font-weight:normal;transform:scaleX(0.8929);transform-origin:right center;">€ 41.52</div>
<svg style="position:absolute;left:952px;top:522.3px" width="14" height="13" viewBox="0 0 14 13"><path d="M0 7.2L5.6 2.2V12.2Z" fill="#cfcfcf"/><path d="M5 4.9H8C9.6 4.9 10.9 3.8 11.3 0.4C12.9 1.7 13.6 3.2 13.3 5.2C12.9 7.8 10.8 9.6 8 9.6H5Z" fill="#cfcfcf"/></svg>
<div style="position:absolute;left:243.5px;top:554px;width:708.5px;height:1px;background:#e6e6e6"></div>
<svg style="position:absolute;left:245px;top:562.3px" width="12" height="10" viewBox="0 0 12 10"><defs><linearGradient id="fr4" x1="0" y1="0" x2="0" y2="1"><stop offset="0" stop-color="#e06472"/><stop offset="1" stop-color="#d22f40"/></linearGradient><linearGradient id="fw4" x1="0" y1="0" x2="0" y2="1"><stop offset="0" stop-color="#f6f6f6"/><stop offset="1" stop-color="#dcdcdc"/></linearGradient></defs><rect x="0" y="0" width="12" height="10" rx="1.5" fill="url(#fw4)"/><path d="M1.5 0H10.5A1.5 1.5 0 0 1 12 1.5V5H0V1.5A1.5 1.5 0 0 1 1.5 0Z" fill="url(#fr4)"/></svg>
<div class="t" style="left:260.8px;top:561.63px;font-size:9.50px;line-height:12.35px;color:#4a8cf2;font-weight:normal;">24181044-01</div>
<div class="t" style="left:261.6px;top:577.86px;font-size:10.08px;line-height:13.1px;color:#404040;font-weight:normal;transform:scaleX(0.8929);transform-origin:left center;">Personal</div>
<div class="t" style="left:261.6px;top:591.06px;font-size:10.08px;line-height:13.1px;color:#404040;font-weight:normal;transform:scaleX(0.8929);transform-origin:left center;">Loan</div>
<div class="t" style="left:213.3px;width:300px;text-align:center;top:576.06px;font-size:10.08px;line-height:13.1px;color:#404040;font-weight:normal;transform:scaleX(0.8929);transform-origin:center center;">18.02.2020</div>
<div class="t" style="right:560.5px;top:576.06px;font-size:10.08px;line-height:13.1px;color:#404040;font-weight:normal;transform:scaleX(0.8929);transform-origin:right center;">€ 36.54</div>
<div class="t" style="left:325.6px;width:300px;text-align:center;top:576.06px;font-size:10.08px;line-height:13.1px;color:#404040;font-weight:normal;transform:scaleX(0.8929);transform-origin:center center;">25.02.2020</div>
<div class="t" style="right:448px;top:576.06px;font-size:10.08px;line-height:13.1px;color:#404040;font-weight:normal;transform:scaleX(0.8929);transform-origin:right center;">€ 3.23</div>
<div class="t" style="right:411.4px;top:576.06px;font-size:10.08px;line-height:13.1px;color:#404040;font-weight:normal;transform:scaleX(0.7857);transform-origin:right center;">7.0%</div>
<div class="t" style="right:363.5px;top:570.06px;font-size:10.08px;line-height:13.1px;color:#404040;font-weight:normal;transform:scaleX(0.8929);transform-origin:right center;">8 m. 7 d.</div>
<div class="t" style="right:363.5px;top:581.66px;font-size:10.08px;line-height:13.1px;color:#404040;font-weight:normal;transform:scaleX(0.8929);transform-origin:right center;">(3)</div>
<div class="t" style="right:317px;top:576.06px;font-size:10.08px;line-height:13.1px;color:#404040;font-weight:normal;transform:scaleX(0.8929);transform-origin:right center;">€ 0.00</div>
<div class="t" style="left:577px;width:300px;text-align:center;top:575.56px;font-size:10.08px;line-height:13.1px;color:#404040;font-weight:normal;transform:scaleX(0.8929);transform-origin:center center;">-</div>
<div class="t" style="right:179.20000000000005px;top:576.06px;font-size:10.08px;line-height:13.1px;color:#404040;font-weight:normal;transform:scaleX(0.8929);transform-origin:right center;">€ 36.54</div>
<div style="position:absolute;left:849.5px;top:568.2px;width:99px;height:24.6px;border:1px solid #e2e2e2;border-radius:3px;box-sizing:border-box;background:#fff"></div>
<div class="t" style="right:64.5px;top:573.44px;font-size:11.20px;line-height:14.56px;color:#999;font-weight:normal;transform:scaleX(0.8929);transform-origin:right center;">€ 36.54</div>
<svg style="position:absolute;left:952px;top:575.3px" width="14" height="13" viewBox="0 0 14 13"><path d="M0 7.2L5.6 2.2V12.2Z" fill="#cfcfcf"/><path d="M5 4.9H8C9.6 4.9 10.9 3.8 11.3 0.4C12.9 1.7 13.6 3.2 13.3 5.2C12.9 7.8 10.8 9.6 8 9.6H5Z" fill="#cfcfcf"/></svg>
<div style="position:absolute;left:243.5px;top:607px;width:708.5px;height:1px;background:#e6e6e6"></div>
<svg style="position:absolute;left:245px;top:615.3px" width="12" height="10" viewBox="0 0 12 10"><defs><linearGradient id="fr5" x1="0" y1="0" x2="0" y2="1"><stop offset="0" stop-color="#e06472"/><stop offset="1" stop-color="#d22f40"/></linearGradient><linearGradient id="fw5" x1="0" y1="0" x2="0" y2="1"><stop offset="0" stop-color="#f6f6f6"/><stop offset="1" stop-color="#dcdcdc"/></linearGradient></defs><rect x="0" y="0" width="12" height="10" rx="1.5" fill="url(#fw5)"/><path d="M1.5 0H10.5A1.5 1.5 0 0 1 12 1.5V5H0V1.5A1.5 1.5 0 0 1 1.5 0Z" fill="url(#fr5)"/></svg>
<div class="t" style="left:260.8px;top:614.63px;font-size:9.50px;line-height:12.35px;color:#4a8cf2;font-weight:normal;">24941525-01</div>
<div class="t" style="left:261.6px;top:630.86px;font-size:10.08px;line-height:13.1px;color:#404040;font-weight:normal;transform:scaleX(0.8929);transform-origin:left center;">Personal</div>
<div class="t" style="left:261.6px;top:644.06px;font-size:10.08px;line-height:13.1px;color:#404040;font-weight:normal;transform:scaleX(0.8929);transform-origin:left center;">Loan</div>
<div class="t" style="left:213.3px;width:300px;text-align:center;top:629.06px;font-size:10.08px;line-height:13.1px;color:#404040;font-weight:normal;transform:scaleX(0.8929);transform-origin:center center;">18.02.2020</div>
<div class="t" style="right:560.5px;top:629.06px;font-size:10.08px;line-height:13.1px;color:#404040;font-weight:normal;transform:scaleX(0.8929);transform-origin:right center;">€ 33.89</div>
<div class="t" style="left:325.6px;width:300px;text-align:center;top:629.06px;font-size:10.08px;line-height:13.1px;color:#404040;font-weight:normal;transform:scaleX(0.8929);transform-origin:center center;">25.02.2020</div>
<div class="t" style="right:448px;top:629.06px;font-size:10.08px;line-height:13.1px;color:#404040;font-weight:normal;transform:scaleX(0.8929);transform-origin:right center;">€ 4.65</div>
<div class="t" style="right:411.4px;top:629.06px;font-size:10.08px;line-height:13.1px;color:#404040;font-weight:normal;transform:scaleX(0.7857);transform-origin:right center;">7.0%</div>
<div class="t" style="right:363.5px;top:623.06px;font-size:10.08px;line-height:13.1px;color:#404040;font-weight:normal;transform:scaleX(0.8929);transform-origin:right center;">5 m. 7 d.</div>
<div class="t" style="right:363.5px;top:634.66px;font-size:10.08px;line-height:13.1px;color:#404040;font-weight:normal;transform:scaleX(0.8929);transform-origin:right center;">(3)</div>
<div class="t" style="right:317px;top:629.06px;font-size:10.08px;line-height:13.1px;color:#404040;font-weight:normal;transform:scaleX(0.8929);transform-origin:right center;">€ 0.00</div>
<div class="t" style="left:577px;width:300px;text-align:center;top:628.56px;font-size:10.08px;line-height:13.1px;color:#404040;font-weight:normal;transform:scaleX(0.8929);transform-origin:center center;">-</div>
<div class="t" style="right:179.20000000000005px;top:629.06px;font-size:10.08px;line-height:13.1px;color:#404040;font-weight:normal;transform:scaleX(0.8929);transform-origin:right center;">€ 33.89</div>
<div style="position:absolute;left:849.5px;top:621.2px;width:99px;height:24.6px;border:1px solid #e2e2e2;border-radius:3px;box-sizing:border-box;background:#fff"></div>
<div class="t" style="right:64.5px;top:626.44px;font-size:11.20px;line-height:14.56px;color:#999;font-weight:normal;transform:scaleX(0.8929);transform-origin:right center;">€ 33.89</div>
<svg style="position:absolute;left:952px;top:628.3px" width="14" height="13" viewBox="0 0 14 13"><path d="M0 7.2L5.6 2.2V12.2Z" fill="#cfcfcf"/><path d="M5 4.9H8C9.6 4.9 10.9 3.8 11.3 0.4C12.9 1.7 13.6 3.2 13.3 5.2C12.9 7.8 10.8 9.6 8 9.6H5Z" fill="#cfcfcf"/></svg>
<div style="position:absolute;left:243.5px;top:660px;width:708.5px;height:1px;background:#e6e6e6"></div>
<svg style="position:absolute;left:245px;top:668.3px" width="12" height="10" viewBox="0 0 12 10"><defs><linearGradient id="fr6" x1="0" y1="0" x2="0" y2="1"><stop offset="0" stop-color="#e06472"/><stop offset="1" stop-color="#d22f40"/></linearGradient><linearGradient id="fw6" x1="0" y1="0" x2="0" y2="1"><stop offset="0" stop-color="#f6f6f6"/><stop offset="1" stop-color="#dcdcdc"/></linearGradient></defs><rect x="0" y="0" width="12" height="10" rx="1.5" fill="url(#fw6)"/><path d="M1.5 0H10.5A1.5 1.5 0 0 1 12 1.5V5H0V1.5A1.5 1.5 0 0 1 1.5 0Z" fill="url(#fr6)"/></svg>
<div class="t" style="left:260.8px;top:667.63px;font-size:9.50px;line-height:12.35px;color:#4a8cf2;font-weight:normal;">24814550-01</div>
<div class="t" style="left:261.6px;top:683.86px;font-size:10.08px;line-height:13.1px;color:#404040;font-weight:normal;transform:scaleX(0.8929);transform-origin:left center;">Personal</div>
<div class="t" style="left:261.6px;top:697.06px;font-size:10.08px;line-height:13.1px;color:#404040;font-weight:normal;transform:scaleX(0.8929);transform-origin:left center;">Loan</div>
<div class="t" style="left:213.3px;width:300px;text-align:center;top:682.06px;font-size:10.08px;line-height:13.1px;color:#404040;font-weight:normal;transform:scaleX(0.8929);transform-origin:center center;">18.02.2020</div>
<div class="t" style="right:560.5px;top:682.06px;font-size:10.08px;line-height:13.1px;color:#404040;font-weight:normal;transform:scaleX(0.8929);transform-origin:right center;">€ 33.07</div>
<div class="t" style="left:325.6px;width:300px;text-align:center;top:682.06px;font-size:10.08px;line-height:13.1px;color:#404040;font-weight:normal;transform:scaleX(0.8929);transform-origin:center center;">25.02.2020</div>
<div class="t" style="right:448px;top:682.06px;font-size:10.08px;line-height:13.1px;color:#404040;font-weight:normal;transform:scaleX(0.8929);transform-origin:right center;">€ 4.71</div>
<div class="t" style="right:411.4px;top:682.06px;font-size:10.08px;line-height:13.1px;color:#404040;font-weight:normal;transform:scaleX(0.7857);transform-origin:right center;">7.0%</div>
<div class="t" style="right:363.5px;top:676.06px;font-size:10.08px;line-height:13.1px;color:#404040;font-weight:normal;transform:scaleX(0.8929);transform-origin:right center;">5 m. 7 d.</div>
<div class="t" style="right:363.5px;top:687.66px;font-size:10.08px;line-height:13.1px;color:#404040;font-weight:normal;transform:scaleX(0.8929);transform-origin:right center;">(3)</div>
<div class="t" style="right:317px;top:682.06px;font-size:10.08px;line-height:13.1px;color:#404040;font-weight:normal;transform:scaleX(0.8929);transform-origin:right center;">€ 0.00</div>
<div class="t" style="left:577px;width:300px;text-align:center;top:681.56px;font-size:10.08px;line-height:13.1px;color:#404040;font-weight:normal;transform:scaleX(0.8929);transform-origin:center center;">-</div>
<div class="t" style="right:179.20000000000005px;top:682.06px;font-size:10.08px;line-height:13.1px;color:#404040;font-weight:normal;transform:scaleX(0.8929);transform-origin:right center;">€ 33.07</div>
<div style="position:absolute;left:849.5px;top:674.2px;width:99px;height:24.6px;border:1px solid #e2e2e2;border-radius:3px;box-sizing:border-box;background:#fff"></div>
<div class="t" style="right:64.5px;top:679.44px;font-size:11.20px;line-height:14.56px;color:#999;font-weight:normal;transform:scaleX(0.8929);transform-origin:right center;">€ 33.07</div>
<svg style="position:absolute;left:952px;top:681.3px" width="14" height="13" viewBox="0 0 14 13"><path d="M0 7.2L5.6 2.2V12.2Z" fill="#cfcfcf"/><path d="M5 4.9H8C9.6 4.9 10.9 3.8 11.3 0.4C12.9 1.7 13.6 3.2 13.3 5.2C12.9 7.8 10.8 9.6 8 9.6H5Z" fill="#cfcfcf"/></svg>
<div style="position:absolute;left:243.5px;top:713px;width:708.5px;height:1px;background:#e6e6e6"></div>
<svg style="position:absolute;left:245px;top:721.3px" width="12" height="10" viewBox="0 0 12 10"><defs><linearGradient id="fr7" x1="0" y1="0" x2="0" y2="1"><stop offset="0" stop-color="#e06472"/><stop offset="1" stop-color="#d22f40"/></linearGradient><linearGradient id="fw7" x1="0" y1="0" x2="0" y2="1"><stop offset="0" stop-color="#f6f6f6"/><stop offset="1" stop-color="#dcdcdc"/></linearGradient></defs><rect x="0" y="0" width="12" height="10" rx="1.5" fill="url(#fw7)"/><path d="M1.5 0H10.5A1.5 1.5 0 0 1 12 1.5V5H0V1.5A1.5 1.5 0 0 1 1.5 0Z" fill="url(#fr7)"/></svg>
<div class="t" style="left:260.8px;top:720.63px;font-size:9.50px;line-height:12.35px;color:#4a8cf2;font-weight:normal;">24535287-01</div>
<div class="t" style="left:261.6px;top:736.86px;font-size:10.08px;line-height:13.1px;color:#404040;font-weight:normal;transform:scaleX(0.8929);transform-origin:left center;">Personal</div>
<div class="t" style="left:261.6px;top:750.06px;font-size:10.08px;line-height:13.1px;color:#404040;font-weight:normal;transform:scaleX(0.8929);transform-origin:left center;">Loan</div>
<div class="t" style="left:213.3px;width:300px;text-align:center;top:735.06px;font-size:10.08px;line-height:13.1px;color:#404040;font-weight:normal;transform:scaleX(0.8929);transform-origin:center center;">18.02.2020</div>
<div class="t" style="right:560.5px;top:735.06px;font-size:10.08px;line-height:13.1px;color:#404040;font-weight:normal;transform:scaleX(0.8929);transform-origin:right center;">€ 29.66</div>
<div class="t" style="left:325.6px;width:300px;text-align:center;top:735.06px;font-size:10.08px;line-height:13.1px;color:#404040;font-weight:normal;transform:scaleX(0.8929);transform-origin:center center;">10.03.2020</div>
<div class="t" style="right:448px;top:735.06px;font-size:10.08px;line-height:13.1px;color:#404040;font-weight:normal;transform:scaleX(0.8929);transform-origin:right center;">€ 2.71</div>
<div class="t" style="right:411.4px;top:735.06px;font-size:10.08px;line-height:13.1px;color:#404040;font-weight:normal;transform:scaleX(0.7857);transform-origin:right center;">7.0%</div>
<div class="t" style="right:363.5px;top:729.06px;font-size:10.08px;line-height:13.1px;color:#404040;font-weight:normal;transform:scaleX(0.8929);transform-origin:right center;">8 m. 23 d.</div>
<div class="t" style="right:363.5px;top:740.66px;font-size:10.08px;line-height:13.1px;color:#404040;font-weight:normal;transform:scaleX(0.8929);transform-origin:right center;">(3)</div>
<div class="t" style="right:317px;top:735.06px;font-size:10.08px;line-height:13.1px;color:#404040;font-weight:normal;transform:scaleX(0.8929);transform-origin:right center;">€ 0.00</div>
<div class="t" style="left:577px;width:300px;text-align:center;top:734.56px;font-size:10.08px;line-height:13.1px;color:#404040;font-weight:normal;transform:scaleX(0.8929);transform-origin:center center;">-</div>
<div class="t" style="right:179.20000000000005px;top:735.06px;font-size:10.08px;line-height:13.1px;color:#404040;font-weight:normal;transform:scaleX(0.8929);transform-origin:right center;">€ 29.66</div>
<div style="position:absolute;left:849.5px;top:727.2px;width:99px;height:24.6px;border:1px solid #e2e2e2;border-radius:3px;box-sizing:border-box;background:#fff"></div>
<div class="t" style="right:64.5px;top:732.44px;font-size:11.20px;line-height:14.56px;color:#999;font-weight:normal;transform:scaleX(0.8929);transform-origin:right center;">€ 29.66</div>
<svg style="position:absolute;left:952px;top:734.3px" width="14" height="13" viewBox="0 0 14 13"><path d="M0 7.2L5.6 2.2V12.2Z" fill="#cfcfcf"/><path d="M5 4.9H8C9.6 4.9 10.9 3.8 11.3 0.4C12.9 1.7 13.6 3.2 13.3 5.2C12.9 7.8 10.8 9.6 8 9.6H5Z" fill="#cfcfcf"/></svg>
<div style="position:absolute;left:243.5px;top:766px;width:708.5px;height:1px;background:#e6e6e6"></div>
</body></html>
